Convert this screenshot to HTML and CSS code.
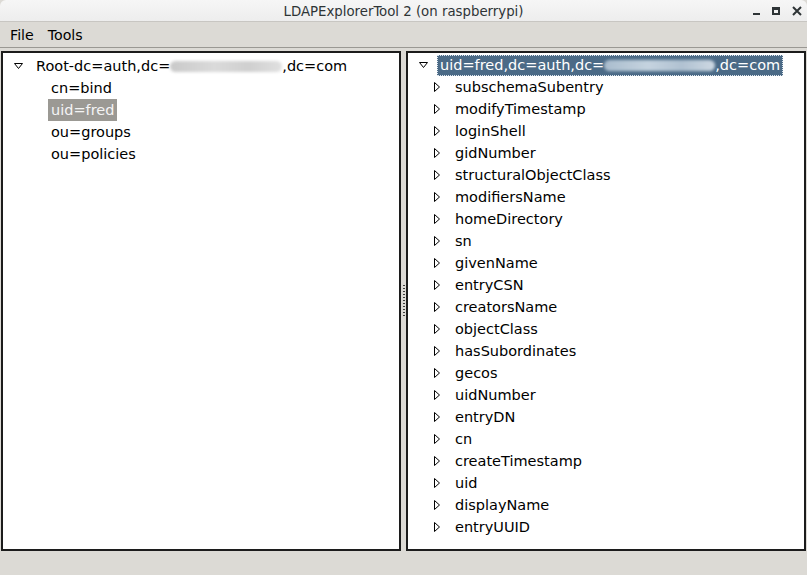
FILE: index.html
```html
<!DOCTYPE html>
<html>
<head>
<meta charset="utf-8">
<link rel="stylesheet" href="styles.css">
</head>
<body>
<div class="window">
  <div class="titlebar">
    <div class="title">LDAPExplorerTool 2 (on raspberrypi)</div>
    <div class="controls">
      <span class="ctl ctl-min"></span>
      <span class="ctl ctl-max"></span>
      <svg class="ctl-close" width="10" height="10" viewBox="0 0 10 10"><path d="M1 1 L9 9 M9 1 L1 9" stroke="#2e3436" stroke-width="2"/></svg>
    </div>
  </div>
  <div class="menubar">
    <span class="menu">File</span>
    <span class="menu">Tools</span>
  </div>
  <div class="panes">
    <div class="pane left">
      <div class="row root">
        <svg class="exp" width="9" height="6" viewBox="0 0 9 6"><path d="M0.5 0.5 H8.5 L4.5 5.5 Z" fill="none" stroke="#000"/></svg>
        <span class="label">Root-dc=auth,dc=<span class="blur blur-left"></span>,dc=com</span>
      </div>
      <div class="row child"><span class="label">cn=bind</span></div>
      <div class="row child"><span class="label sel-gray">uid=fred</span></div>
      <div class="row child"><span class="label">ou=groups</span></div>
      <div class="row child"><span class="label">ou=policies</span></div>
    </div>
    <div class="gutter"><div class="grip"></div></div>
    <div class="pane right">
      <div class="row root">
        <svg class="exp" width="9" height="6" viewBox="0 0 9 6"><path d="M0.5 0.5 H8.5 L4.5 5.5 Z" fill="none" stroke="#000"/></svg>
        <span class="label sel-blue">uid=fred,dc=auth,dc=<span class="blur blur-right"></span>,dc=com</span>
      </div>
      <div class="row attr"><svg class="col" width="6" height="10" viewBox="0 0 6 10"><path d="M0.5 0.5 V9.5 L5.5 5 Z" fill="none" stroke="#000"/></svg><span class="label">subschemaSubentry</span></div>
      <div class="row attr"><svg class="col" width="6" height="10" viewBox="0 0 6 10"><path d="M0.5 0.5 V9.5 L5.5 5 Z" fill="none" stroke="#000"/></svg><span class="label">modifyTimestamp</span></div>
      <div class="row attr"><svg class="col" width="6" height="10" viewBox="0 0 6 10"><path d="M0.5 0.5 V9.5 L5.5 5 Z" fill="none" stroke="#000"/></svg><span class="label">loginShell</span></div>
      <div class="row attr"><svg class="col" width="6" height="10" viewBox="0 0 6 10"><path d="M0.5 0.5 V9.5 L5.5 5 Z" fill="none" stroke="#000"/></svg><span class="label">gidNumber</span></div>
      <div class="row attr"><svg class="col" width="6" height="10" viewBox="0 0 6 10"><path d="M0.5 0.5 V9.5 L5.5 5 Z" fill="none" stroke="#000"/></svg><span class="label">structuralObjectClass</span></div>
      <div class="row attr"><svg class="col" width="6" height="10" viewBox="0 0 6 10"><path d="M0.5 0.5 V9.5 L5.5 5 Z" fill="none" stroke="#000"/></svg><span class="label">modifiersName</span></div>
      <div class="row attr"><svg class="col" width="6" height="10" viewBox="0 0 6 10"><path d="M0.5 0.5 V9.5 L5.5 5 Z" fill="none" stroke="#000"/></svg><span class="label">homeDirectory</span></div>
      <div class="row attr"><svg class="col" width="6" height="10" viewBox="0 0 6 10"><path d="M0.5 0.5 V9.5 L5.5 5 Z" fill="none" stroke="#000"/></svg><span class="label">sn</span></div>
      <div class="row attr"><svg class="col" width="6" height="10" viewBox="0 0 6 10"><path d="M0.5 0.5 V9.5 L5.5 5 Z" fill="none" stroke="#000"/></svg><span class="label">givenName</span></div>
      <div class="row attr"><svg class="col" width="6" height="10" viewBox="0 0 6 10"><path d="M0.5 0.5 V9.5 L5.5 5 Z" fill="none" stroke="#000"/></svg><span class="label">entryCSN</span></div>
      <div class="row attr"><svg class="col" width="6" height="10" viewBox="0 0 6 10"><path d="M0.5 0.5 V9.5 L5.5 5 Z" fill="none" stroke="#000"/></svg><span class="label">creatorsName</span></div>
      <div class="row attr"><svg class="col" width="6" height="10" viewBox="0 0 6 10"><path d="M0.5 0.5 V9.5 L5.5 5 Z" fill="none" stroke="#000"/></svg><span class="label">objectClass</span></div>
      <div class="row attr"><svg class="col" width="6" height="10" viewBox="0 0 6 10"><path d="M0.5 0.5 V9.5 L5.5 5 Z" fill="none" stroke="#000"/></svg><span class="label">hasSubordinates</span></div>
      <div class="row attr"><svg class="col" width="6" height="10" viewBox="0 0 6 10"><path d="M0.5 0.5 V9.5 L5.5 5 Z" fill="none" stroke="#000"/></svg><span class="label">gecos</span></div>
      <div class="row attr"><svg class="col" width="6" height="10" viewBox="0 0 6 10"><path d="M0.5 0.5 V9.5 L5.5 5 Z" fill="none" stroke="#000"/></svg><span class="label">uidNumber</span></div>
      <div class="row attr"><svg class="col" width="6" height="10" viewBox="0 0 6 10"><path d="M0.5 0.5 V9.5 L5.5 5 Z" fill="none" stroke="#000"/></svg><span class="label">entryDN</span></div>
      <div class="row attr"><svg class="col" width="6" height="10" viewBox="0 0 6 10"><path d="M0.5 0.5 V9.5 L5.5 5 Z" fill="none" stroke="#000"/></svg><span class="label">cn</span></div>
      <div class="row attr"><svg class="col" width="6" height="10" viewBox="0 0 6 10"><path d="M0.5 0.5 V9.5 L5.5 5 Z" fill="none" stroke="#000"/></svg><span class="label">createTimestamp</span></div>
      <div class="row attr"><svg class="col" width="6" height="10" viewBox="0 0 6 10"><path d="M0.5 0.5 V9.5 L5.5 5 Z" fill="none" stroke="#000"/></svg><span class="label">uid</span></div>
      <div class="row attr"><svg class="col" width="6" height="10" viewBox="0 0 6 10"><path d="M0.5 0.5 V9.5 L5.5 5 Z" fill="none" stroke="#000"/></svg><span class="label">displayName</span></div>
      <div class="row attr"><svg class="col" width="6" height="10" viewBox="0 0 6 10"><path d="M0.5 0.5 V9.5 L5.5 5 Z" fill="none" stroke="#000"/></svg><span class="label">entryUUID</span></div>
    </div>
  </div>
</div>
</body>
</html>
```
FILE: styles.css
```css
html, body {
  margin: 0;
  padding: 0;
  background: #dcdad5;
}
.window {
  width: 807px;
  height: 575px;
  display: flex;
  flex-direction: column;
  background: #dcdad5;
  font-family: "DejaVu Sans", sans-serif;
  color: #000;
  overflow: hidden;
}
.titlebar {
  height: 22px;
  box-sizing: border-box;
  background: linear-gradient(#f6f6f6, #ededed);
  border-bottom: 1px solid #c8c6c2;
  border-radius: 6px 6px 0 0;
  display: flex;
  align-items: center;
  justify-content: center;
  position: relative;
}
.title {
  font-family: "DejaVu Sans Condensed", "DejaVu Sans", sans-serif;
  font-stretch: condensed;
  font-size: 14.8px;
  color: #2e3436;
}
.controls {
  position: absolute;
  right: 5px;
  top: 6px;
  display: flex;
  align-items: flex-end;
  gap: 12px;
}
.ctl-min {
  width: 7px;
  height: 2px;
  background: #2e3436;
  margin-bottom: 1px;
}
.ctl-max {
  width: 8px;
  height: 8px;
  box-sizing: border-box;
  border: 2px solid #2e3436;
  border-top-width: 3px;
  margin-bottom: 1px;
}
.ctl-close {
  display: block;
}
.menubar {
  height: 26px;
  box-sizing: border-box;
  display: flex;
  align-items: center;
  padding-left: 10px;
  padding-top: 1px;
  gap: 14px;
  border-bottom: 1px solid #9a9893;
  font-family: "DejaVu Sans", sans-serif;
  font-size: 14.2px;
}
.panes {
  display: flex;
  padding: 3px 1px 0 1px;
  height: 500px;
  box-sizing: content-box;
}
.pane {
  background: #fff;
  border: 2px solid #1c1c1c;
  box-sizing: border-box;
  height: 500px;
  font-size: 14.5px;
  overflow: hidden;
}
.pane.left {
  width: 400px;
  padding: 2px 0 0 10px;
}
.pane.right {
  width: 400px;
  padding: 1px 0 0 10px;
}
.gutter {
  width: 5px;
  display: flex;
  align-items: center;
  justify-content: center;
}
.grip {
  width: 2px;
  height: 33px;
  background: repeating-linear-gradient(#3c3c3c 0 1px, transparent 1px 3px);
}
.row {
  height: 22px;
  display: flex;
  align-items: center;
  white-space: nowrap;
}
.row .exp {
  margin-left: 1px;
  margin-right: 13px;
  flex: none;
}
.pane.right .row .exp {
  margin-right: 9px;
}
.row.child {
  padding-left: 35px;
}
.row.child .label {
  padding: 0 3px;
  line-height: 22px;
}
.row.attr {
  padding-left: 16px;
}
.row.attr .col {
  margin-right: 15px;
  flex: none;
}
.label {
  line-height: 22px;
}
.sel-gray {
  background: #9b9994;
  color: #f4f4f4;
}
.sel-blue {
  background: #4b6a86;
  color: #fff;
  outline: 1px dotted #dfe7ef;
  outline-offset: -1px;
  padding: 0 3px;
  line-height: 21px;
}
.blur {
  display: inline-block;
  height: 11px;
  vertical-align: -1px;
  border-radius: 6px;
  filter: blur(1.5px);
}
.blur-left {
  width: 112px;
  background: linear-gradient(90deg, #c9c9c9, #dadada 40%, #cfcfcf 70%, #e0e0e0);
}
.blur-right {
  width: 111px;
  background: linear-gradient(90deg, #a9bccd, #c5d3df 40%, #b0c1d1 70%, #cdd8e2);
}
```
